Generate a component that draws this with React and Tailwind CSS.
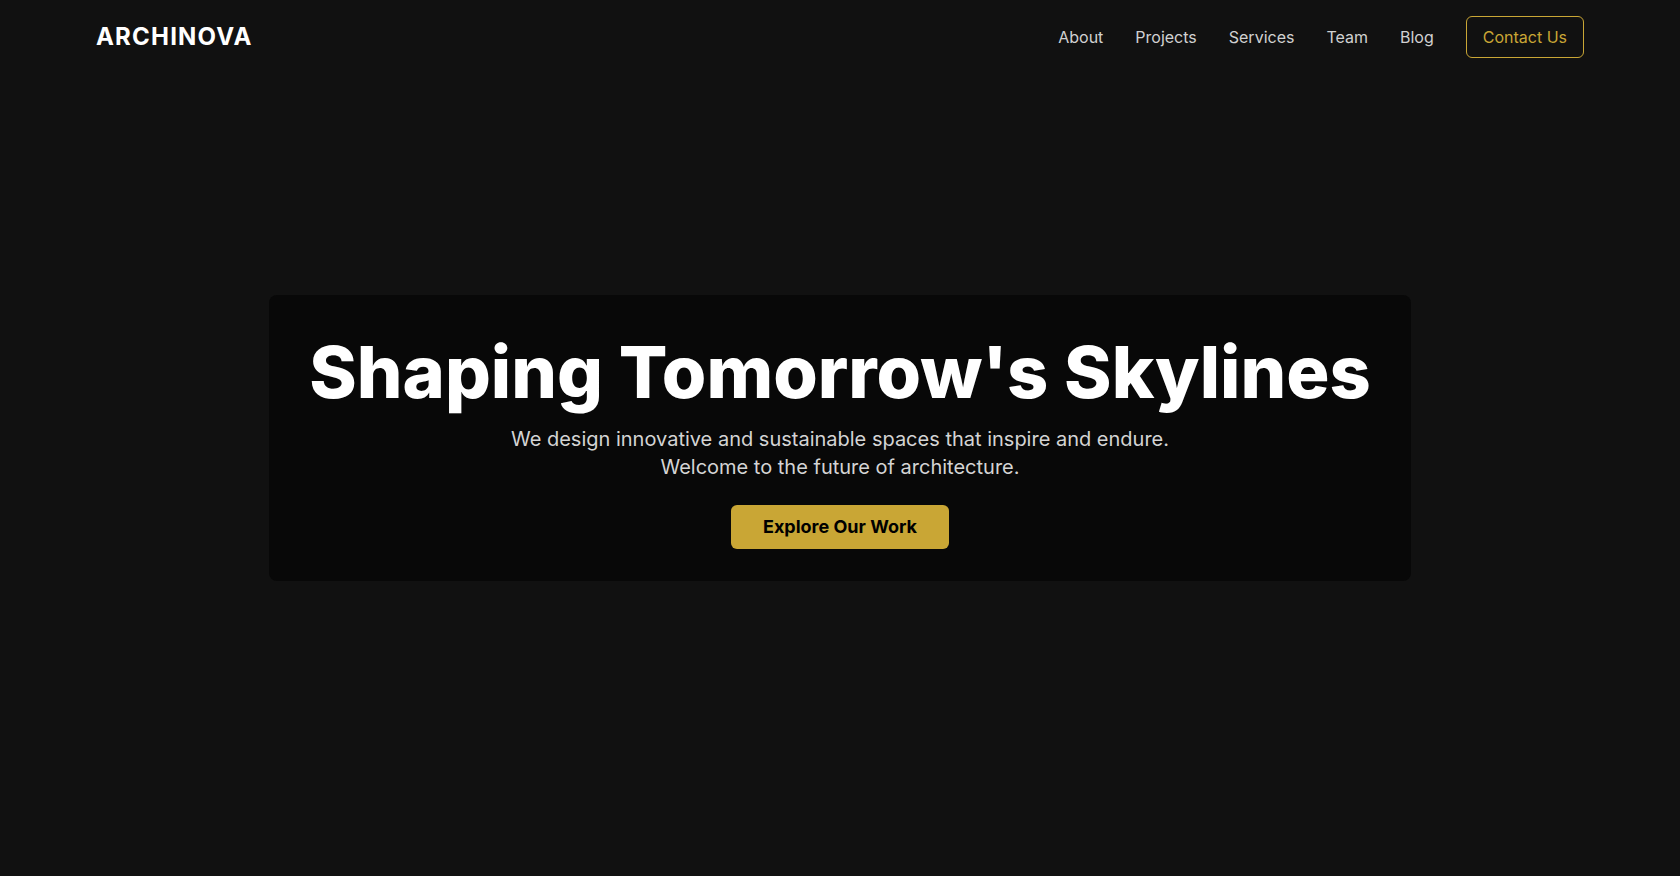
import React from 'react';

const NAV_LINKS = ['About', 'Projects', 'Services', 'Team', 'Blog'];

export default function App() {
  return (
    <div className="relative min-h-screen bg-[#111111] text-white font-['Inter','Noto_Sans',sans-serif]">

      {/* ── Header ── */}
      <header className="absolute top-0 left-0 right-0 z-10 flex items-center justify-between px-24 py-4">
        <div className="text-2xl font-bold tracking-wider text-white">ARCHINOVA</div>
        <nav className="flex items-center gap-8">
          {NAV_LINKS.map((link) => (
            <a key={link} href="#" className="text-base text-[#d1d1d1] hover:text-white">
              {link}
            </a>
          ))}
          <a href="#"
            className="rounded-md border border-[#c9a635] px-4 py-2 text-base text-[#c9a635]">
            Contact Us
          </a>
        </nav>
      </header>

      {/* ── Hero ── */}
      <main className="flex min-h-screen items-center justify-center">
        <div className="flex flex-col items-center rounded-lg bg-[#080808] px-10 pt-8 pb-8 text-center">
          <h1 className="text-7xl font-extrabold leading-tight text-white">
            Shaping Tomorrow's Skylines
          </h1>
          <p className="mt-2 text-xl leading-7 text-[#d4d4d4]">
            We design innovative and sustainable spaces that inspire and endure.
            <br />
            Welcome to the future of architecture.
          </p>
          <a href="#"
            className="mt-6 rounded-md bg-[#c9a635] px-8 py-2 text-lg font-bold text-black">
            Explore Our Work
          </a>
        </div>
      </main>
    </div>
  );
}
